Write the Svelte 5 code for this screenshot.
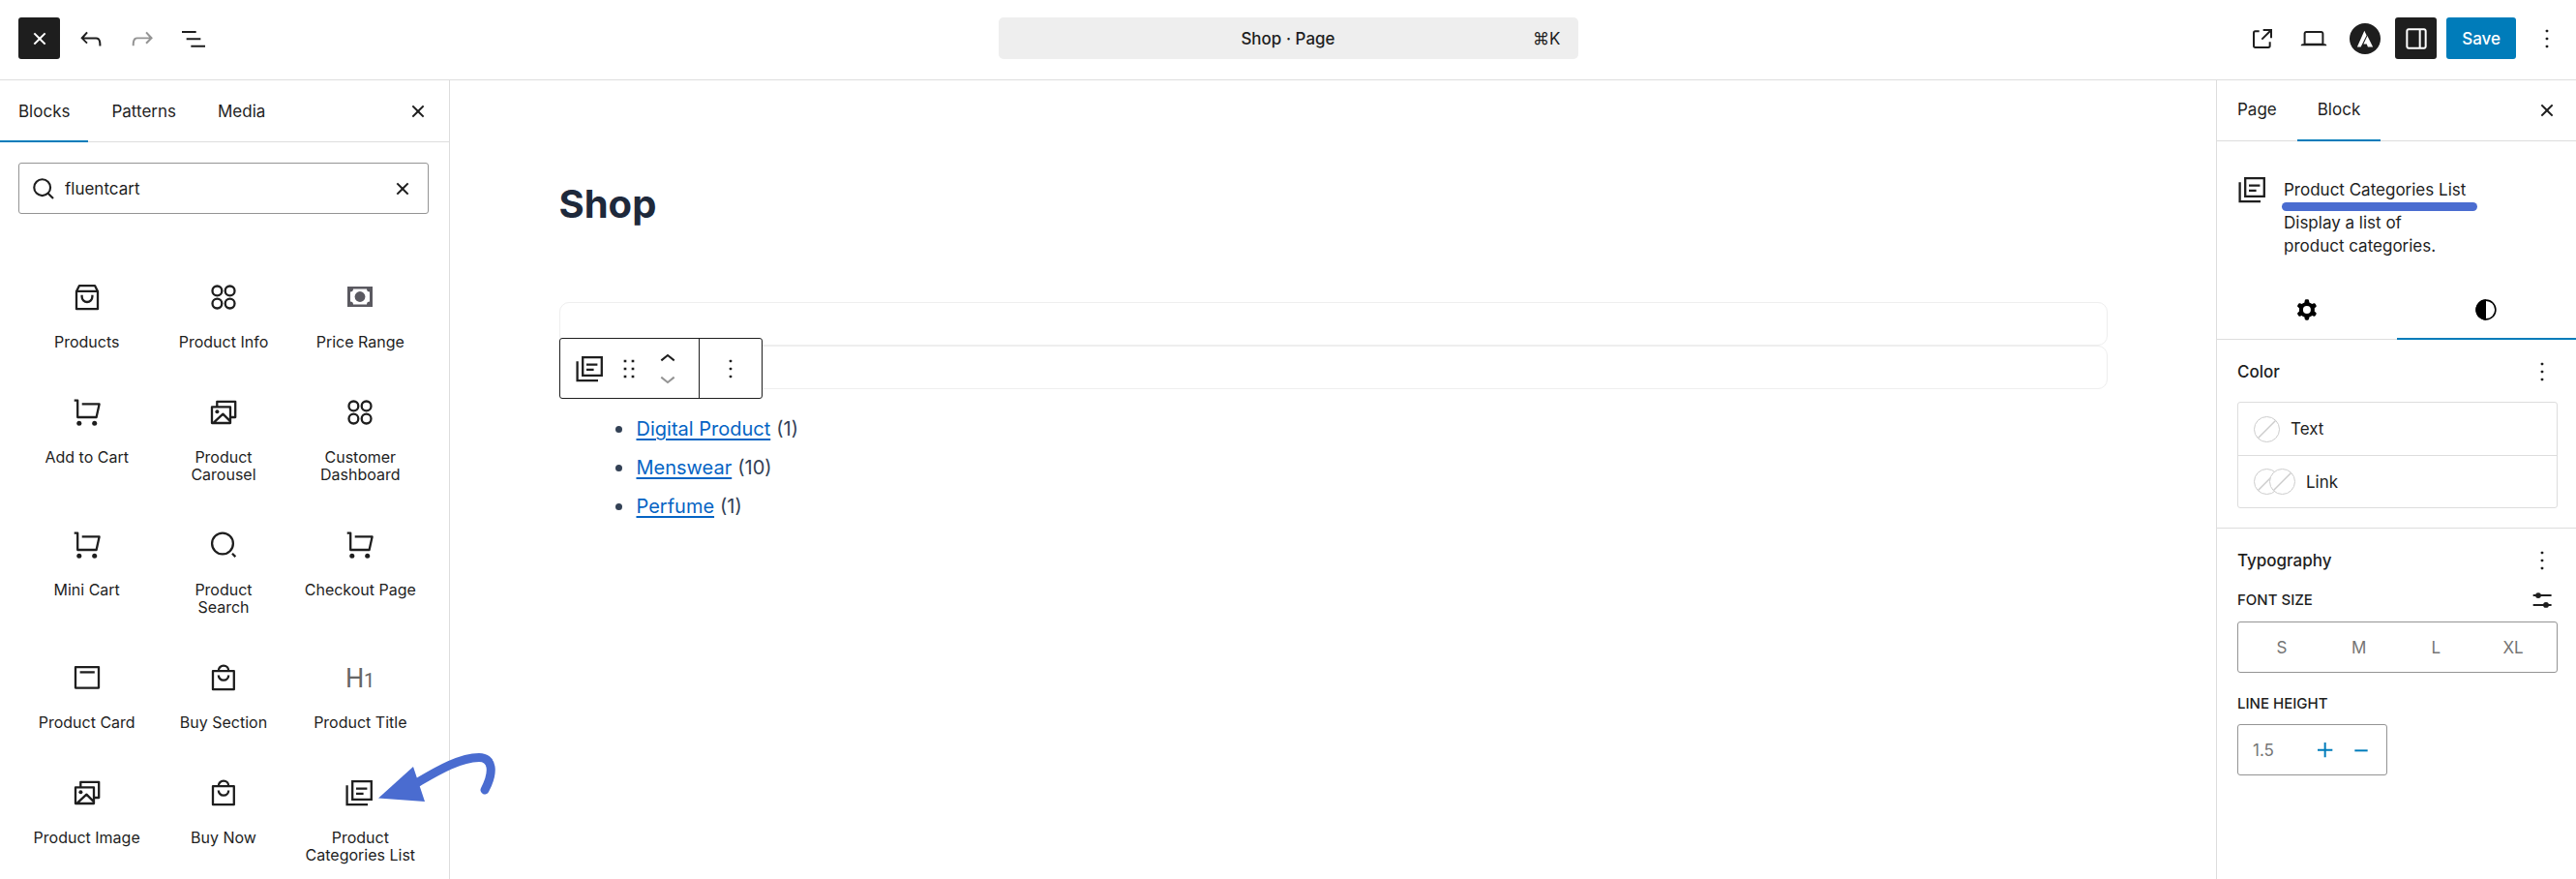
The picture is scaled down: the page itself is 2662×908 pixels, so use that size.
<script>
  const icons = {
    close: '<path d="M12 13.06l3.712 3.713 1.061-1.06L13.061 12l3.712-3.712-1.06-1.06L12 10.938 8.288 7.227l-1.061 1.06L10.939 12l-3.712 3.712 1.06 1.061L12 13.061z"/>',
    undo: '<path d="M18.3 11.7c-.6-.6-1.4-.9-2.3-.9H6.7l2.9-3.3-1.1-1-4.5 5L8.5 16l1-1-2.7-2.7H16c.5 0 .9.2 1.3.5 1 1 1 3.4 1 4.5v.3h1.5v-.2c0-1.5 0-4.3-1.5-5.7z"/>',
    redo: '<path d="M15.6 6.5l-1.1 1 2.9 3.3H8c-.9 0-1.7.3-2.3.9-1.4 1.5-1.4 4.2-1.4 5.6v.2h1.5v-.3c0-1.1 0-3.5 1-4.5.3-.3.7-.5 1.3-.5h9.2L14.5 15l1.1 1.1 4.6-4.6-4.6-5z"/>',
    outline: '<path d="M3 6h11v1.5H3V6Zm3.5 5.5h11V13h-11v-1.5ZM21 17H10v1.5h11V17Z"/>',
    external: '<path d="M19.5 4.5h-7V6h4.44l-5.97 5.97 1.06 1.06L18 7.06v4.44h1.5v-7Zm-13 1a2 2 0 0 0-2 2v10a2 2 0 0 0 2 2h10a2 2 0 0 0 2-2v-3H17v3a.5.5 0 0 1-.5.5h-10a.5.5 0 0 1-.5-.5v-10a.5.5 0 0 1 .5-.5h3V5.5h-3Z"/>',
    laptop: '<path d="M20.5 16h-.7V8c0-1.1-.9-2-2-2H6.2c-1.1 0-2 .9-2 2v8h-.7c-.8 0-1.5.7-1.5 1.5h20c0-.8-.7-1.5-1.5-1.5zM5.7 8c0-.3.2-.5.5-.5h11.6c.3 0 .5.2.5.5v7.6H5.7V8z"/>',
    astra: '<circle cx="12" cy="12" r="12"/><path fill="#fff" d="M11.5 5.9l1.7 3.5-4.5 8.9H5.9zM13.8 9.8l4.3 8.5h-3.9l-.9-2.2h-2.5z"/>',
    drawer: '<path d="M18 4H6c-1.1 0-2 .9-2 2v12c0 1.1.9 2 2 2h12c1.1 0 2-.9 2-2V6c0-1.1-.9-2-2-2zm-4 14.5H6c-.3 0-.5-.2-.5-.5V6c0-.3.2-.5.5-.5h8v13zm4.5-.5c0 .3-.2.5-.5.5h-2.5v-13H18c.3 0 .5.2.5.5v12z"/>',
    more: '<rect x="11" y="5" width="2" height="2" rx=".6"/><rect x="11" y="11" width="2" height="2" rx=".6"/><rect x="11" y="17" width="2" height="2" rx=".6"/>',
    drag: '<path d="M8 7h2V5H8v2zm0 6h2v-2H8v2zm0 6h2v-2H8v2zm6-14v2h2V5h-2zm0 8h2v-2h-2v2zm0 6h2v-2h-2v2z"/>',
    up: '<path d="M6.5 12.4L12 8l5.5 4.4-.9 1.2L12 10l-4.5 3.6-1-1.2z"/>',
    down: '<path d="M17.5 11.6L12 16l-5.5-4.4.9-1.2L12 14l4.5-3.6 1 1.2z"/>',
    find: '<g fill="none" stroke="currentColor" stroke-width="1.6"><circle cx="11" cy="11" r="6.3"/><path d="M15.5 15.5l4 4"/></g>',
    gear: '<path fill-rule="evenodd" d="M10.289 4.836A1 1 0 0111.275 4h1.306a1 1 0 01.987.836l.244 1.466c.787.26 1.503.679 2.108 1.218l1.393-.522a1 1 0 011.216.437l.653 1.13a1 1 0 01-.23 1.273l-1.148.944a6.025 6.025 0 010 2.435l1.149.946a1 1 0 01.23 1.272l-.653 1.13a1 1 0 01-1.216.437l-1.394-.522c-.605.54-1.32.958-2.108 1.218l-.244 1.466a1 1 0 01-.987.836h-1.306a1 1 0 01-.986-.836l-.244-1.466a5.995 5.995 0 01-2.108-1.218l-1.394.522a1 1 0 01-1.217-.436l-.653-1.131a1 1 0 01.23-1.272l1.149-.946a6.026 6.026 0 010-2.435l-1.148-.944a1 1 0 01-.23-1.272l.653-1.131a1 1 0 011.217-.437l1.393.522a5.994 5.994 0 012.108-1.218l.244-1.466zM14.929 12a3 3 0 11-6 0 3 3 0 016 0z"/>',
    styles: '<circle cx="12" cy="12" r="7.4" fill="none" stroke="currentColor" stroke-width="1.2"/><path d="M12 4a8 8 0 0 0 0 16z"/>',
    sliders: '<path d="M5 7.500h14.2V9H5zM5 15h14.2v1.500H5z"/><circle cx="9" cy="8.3" r="2.2"/><circle cx="15" cy="15.700" r="2.2"/>',
    plus: '<path d="M11 12.5V17.5H12.5V12.5H17.5V11H12.5V6H11V11H6V12.5H11Z"/>',
    minus: '<path d="M7 11.5h10V13H7z"/>'
  };

  const line = (body) => `<g fill="none" stroke="currentColor" stroke-width="2.3">${body}</g>`;
  const cart = line('<path d="M2.7 3.6H6.2V21H25.6L28.6 7.4H10.7" stroke-linejoin="round"/>') + '<circle cx="7.8" cy="27.3" r="2.5"/><circle cx="23.7" cy="27.3" r="2.5"/>';
  const circles = line('<circle cx="9.4" cy="9.4" r="4.9"/><circle cx="22.6" cy="9.4" r="4.9"/><circle cx="9.4" cy="22.6" r="4.9"/><circle cx="22.6" cy="22.6" r="4.9"/>');
  const photos = line('<path d="M9.3 9.5V4.8H28.2V21H24M4 10.4h19V27H4zM6 26.4l9.4-8.8 8 8" stroke-linejoin="round"/>') + '<circle cx="9.4" cy="15.2" r="2"/>';
  const bag = line('<path d="M5 9.2h21.8V28.2H5zM10.8 8.8a5.2 5.2 0 0 1 10.4 0M10.8 13.4a5.2 5.2 0 0 0 10.4 0" stroke-linejoin="round"/>');

  const art = {
    list: line('<path d="M8.2 4.1h19.6v18.8H8.2zM2.6 8.2v19.9H24M12 11.6h11.4M12 16.8h7.6"/>'),
    box: line('<path d="M5 10v18.2h22V10L24 4.1H8L5 10zM5 9.8h22M10.6 13.8v1.8a5.4 5.4 0 0 0 10.8 0v-1.8" stroke-linejoin="round"/>'),
    circles,
    price: '<path fill="#5a5960" fill-rule="evenodd" d="M3 5h26v21H3zM9 7.4c0 2-1 3-3 3v10.2c2 0 3 1 3 3h14c0-2 1-3 3-3V10.4c-2 0-3-1-3-3z"/><circle fill="#5a5960" cx="16" cy="15.5" r="5.4"/>',
    cart,
    photos,
    lens: line('<circle cx="15" cy="14.5" r="10.9"/><path d="M25 24.8l3.3 3.3"/>'),
    card: line('<path d="M4 5.2h24v21.4H4z" stroke-linejoin="round"/><path d="M8.6 10.4h15.2"/>'),
    bag,
    heading: '<g fill="#666" font-family="Roboto, sans-serif"><text x="1" y="26" font-size="27">H</text><text x="20" y="26" font-size="20">1</text></g>'
  };

  const blocks = [
    ['box', 'Products'], ['circles', 'Product Info'], ['price', 'Price Range'],
    ['cart', 'Add to Cart'], ['photos', 'Product\nCarousel'], ['circles', 'Customer\nDashboard'],
    ['cart', 'Mini Cart'], ['lens', 'Product\nSearch'], ['cart', 'Checkout Page'],
    ['card', 'Product Card'], ['bag', 'Buy Section'], ['heading', 'Product Title'],
    ['photos', 'Product Image'], ['bag', 'Buy Now'], ['list', 'Product\nCategories List']
  ];
  const categories = [['Digital Product', 1], ['Menswear', 10], ['Perfume', 1]];

  let query = $state('fluentcart');
</script>

{#snippet icon(name)}
  <svg class="icon" viewBox="0 0 24 24" fill="currentColor" aria-hidden="true">{@html icons[name]}</svg>
{/snippet}
{#snippet picture(name)}
  <svg class="icon" viewBox="0 0 32 32" fill="currentColor" aria-hidden="true">{@html art[name]}</svg>
{/snippet}
{#snippet swatch()}
  <svg class="swatch" viewBox="0 0 27 27" aria-hidden="true"><circle cx="13.5" cy="13.5" r="13" fill="#fff" stroke="#ccc" /><path d="M4.5 22.5l18-18" stroke="#ccc" stroke-width="1.5" /></svg>
{/snippet}

<div class="editor">
  <header class="topbar">
    <div class="tools">
      <button class="tool dark" aria-label="Close">{@render icon('close')}</button>
      <button class="tool" aria-label="Undo">{@render icon('undo')}</button>
      <button class="tool faded" aria-label="Redo">{@render icon('redo')}</button>
      <button class="tool" aria-label="Document overview">{@render icon('outline')}</button>
    </div>
    <button class="command"><span></span><span class="doc">Shop · Page</span><span class="keys">⌘K</span></button>
    <div class="tools end">
      <button class="tool" aria-label="View page">{@render icon('external')}</button>
      <button class="tool" aria-label="Preview">{@render icon('laptop')}</button>
      <button class="tool" aria-label="Astra settings">{@render icon('astra')}</button>
      <button class="tool dark" aria-label="Settings">{@render icon('drawer')}</button>
      <button class="save">Save</button>
      <button class="tool" aria-label="Options">{@render icon('more')}</button>
    </div>
  </header>

  <div class="body">
    <aside class="inserter">
      <nav class="tabs left">
        <button class="tab active">Blocks</button>
        <button class="tab">Patterns</button>
        <button class="tab">Media</button>
        <button class="x" aria-label="Close inserter">{@render icon('close')}</button>
      </nav>
      <div class="search">
        {@render icon('find')}
        <input type="text" aria-label="Search blocks" bind:value={query} />
        <button class="plain" aria-label="Reset search">{@render icon('close')}</button>
      </div>
      <div class="grid">
        {#each blocks as [pic, label]}
          <button class="block">{@render picture(pic)}<span>{label}</span></button>
        {/each}
      </div>
    </aside>

    <main class="canvas">
      <div class="content">
        <h1>Shop</h1>
        <div class="slots">
          <div class="slot"></div>
          <div class="slot"></div>
          <div class="toolbar">
            <div class="group">
              <button class="plain" aria-label="Block type">{@render picture('list')}</button>
              <button class="plain drag" aria-label="Drag">{@render icon('drag')}</button>
              <div class="movers">
                <button class="mover" aria-label="Move up">{@render icon('up')}</button>
                <button class="mover faded" aria-label="Move down">{@render icon('down')}</button>
              </div>
            </div>
            <button class="options" aria-label="Block options">{@render icon('more')}</button>
          </div>
        </div>
        <ul>
          {#each categories as [name, count]}
            <li><a href="#{name}">{name}</a> ({count})</li>
          {/each}
        </ul>
      </div>
    </main>

    <aside class="inspector">
      <nav class="tabs right">
        <button class="tab">Page</button>
        <button class="tab active">Block</button>
        <button class="x" aria-label="Close settings">{@render icon('close')}</button>
      </nav>
      <section class="about">
        {@render picture('list')}
        <div>
          <h2 class="name">Product Categories List<span class="marker"></span></h2>
          <p>Display a list of<br />product categories.</p>
        </div>
      </section>
      <nav class="views">
        <button aria-label="Settings">{@render icon('gear')}</button>
        <button class="active" aria-label="Styles">{@render icon('styles')}</button>
      </nav>
      <section class="panel">
        <div class="heading"><h2>Color</h2><button class="plain" aria-label="Color options">{@render icon('more')}</button></div>
        <div class="colors">
          <button class="color">{@render swatch()}<span>Text</span></button>
          <button class="color"><span class="pair">{@render swatch()}{@render swatch()}</span><span>Link</span></button>
        </div>
      </section>
      <section class="panel type">
        <div class="heading"><h2>Typography</h2><button class="plain" aria-label="Typography options">{@render icon('more')}</button></div>
        <div class="caption"><span>FONT SIZE</span><button class="plain" aria-label="Set custom size">{@render icon('sliders')}</button></div>
        <div class="sizes">
          {#each ['S', 'M', 'L', 'XL'] as size}
            <button>{size}</button>
          {/each}
        </div>
        <label class="caption second" for="line-height">LINE HEIGHT</label>
        <div class="stepper">
          <input id="line-height" type="text" placeholder="1.5" />
          <button class="plain" aria-label="Increment">{@render icon('plus')}</button>
          <button class="plain" aria-label="Decrement">{@render icon('minus')}</button>
        </div>
      </section>
    </aside>
  </div>

  <svg class="arrow" viewBox="0 0 124 52" aria-hidden="true">
    <path d="M41 35C60 24 84 9.500 104 9.500C118 9.500 120 24 110 43" fill="none" stroke="#4a6cd0" stroke-width="9" stroke-linecap="round" />
    <path d="M0 51.500L36 19L48 55z" fill="#4a6cd0" />
  </svg>
</div>

<style>
  :global(body) { margin: 0; background: #fff; }
  .editor {
    position: relative;
    display: flex;
    flex-direction: column;
    height: 100vh;
    overflow: hidden;
    background: #fff;
    color: #1e1e1e;
    font: 17px/24px Inter, sans-serif;
  }
  .editor * { box-sizing: border-box; }
  button { padding: 0; border: 0; background: none; color: inherit; font: inherit; }
  input { min-width: 0; padding: 0; border: 0; outline: 0; background: none; color: inherit; font: inherit; }
  h1, h2, p, ul { margin: 0; font-weight: 400; font-size: inherit; }
  .icon { display: block; flex: none; width: 32px; height: 32px; }

  .topbar {
    display: grid;
    grid-template-columns: 1fr 599px 1fr;
    align-items: center;
    padding: 18px 9px 21px;
    border-bottom: 1px solid #ddd;
  }
  .tools { display: flex; gap: 10px; padding-left: 10px; }
  .end { justify-content: flex-end; }
  .tool { display: grid; place-items: center; width: 43px; height: 43px; border-radius: 3px; }
  .dark { background: #1e1e1e; color: #fff; }
  .faded { color: #949494; }
  .command {
    display: grid;
    grid-template-columns: 1fr auto 1fr;
    align-items: center;
    height: 43px;
    padding: 0 18px;
    border-radius: 5px;
    background: #eee;
  }
  .doc { font-weight: 500; }
  .keys { text-align: right; }
  .save { height: 43px; padding: 0 16px; border-radius: 3px; background: #007cba; color: #fff; font-weight: 500; }

  .body { display: flex; flex: 1; min-height: 0; }
  .inserter { flex: none; width: 465px; overflow: hidden; border-right: 1px solid #ddd; }
  .inspector { flex: none; width: 372px; border-left: 1px solid #ddd; }
  .tabs { display: flex; height: 63px; border-bottom: 1px solid #ddd; }
  .tab { position: relative; padding: 0 19px; }
  .left { gap: 5px; height: 64px; }
  .right .tab { padding: 0 21px 2px; }
  .active::after {
    content: '';
    position: absolute;
    right: 0;
    bottom: -1px;
    left: 0;
    height: 2px;
    background: #007cba;
  }
  .x { margin-left: auto; padding: 0 14px; }
  .left .x { padding: 0 16px; }

  .search {
    display: flex;
    align-items: center;
    height: 53px;
    margin: 21px 21px 0 19px;
    padding: 0 10px 0 9px;
    border: 1px solid #949494;
    border-radius: 3px;
  }
  .search input { flex: 1; margin-left: 6px; }
  .grid {
    display: grid;
    grid-template-columns: repeat(3, 1fr);
    margin: 46px 21px 0 19px;
  }
  .block {
    display: flex;
    flex-direction: column;
    align-items: center;
    gap: 21px;
    padding: 24px 8px;
    font-size: 16px;
    line-height: 18px;
    white-space: pre-line;
  }

  .canvas { flex: 1; padding: 104px 112px 0; }
  .content { max-width: 1600px; margin: 0 auto; }
  h1 { color: #1e293b; font-size: 40px; font-weight: 700; line-height: 48px; }
  .slots { position: relative; margin-top: 77px; }
  .slot { height: 45px; border: 1px solid #eee; border-radius: 10px; }
  .toolbar {
    position: absolute;
    top: 37px;
    left: 0;
    display: flex;
    height: 63px;
    border: 1px solid #1e1e1e;
    border-radius: 3px;
    background: #fff;
  }
  .group { display: flex; align-items: center; padding: 0 16px 0 15px; border-right: 1px solid #1e1e1e; }
  .drag { margin: 0 8px; }
  .movers { display: flex; flex-direction: column; }
  .mover { display: flex; align-items: center; height: 20px; }
  .options { padding: 0 16px; }
  ul { margin-top: 21px; padding-left: 80px; color: #334155; font-size: 20px; line-height: 40px; list-style: none; }
  li { display: flex; align-items: center; gap: 6px; }
  li::before {
    content: '';
    width: 7px;
    height: 7px;
    margin: 0 9px 0 -22px;
    border-radius: 50%;
    background: #334155;
  }
  a { color: #0564c4; text-decoration: underline; text-decoration-thickness: 2px; text-underline-offset: 3px; }

  .about { display: flex; gap: 16px; padding: 34px 19px 24px 21px; }
  .name { position: relative; width: max-content; margin: 4px 0 10px; }
  .marker {
    position: absolute;
    right: -12px;
    bottom: -10px;
    left: -2px;
    height: 9px;
    border-radius: 5px;
    background: #4a6cd0;
  }
  .views { display: grid; grid-template-columns: 1fr 1fr; height: 61px; border-bottom: 1px solid #ddd; color: #000; }
  .views button { position: relative; display: grid; place-items: center; }
  .panel { padding: 11px 19px 20px 21px; border-bottom: 1px solid #ddd; }
  .type { border: 0; }
  .heading { display: flex; align-items: center; justify-content: space-between; height: 43px; }
  .heading h2 { font-weight: 500; }
  .colors { margin-top: 10px; border: 1px solid #ddd; border-radius: 3px; }
  .color { display: flex; align-items: center; gap: 11px; width: 100%; height: 54px; padding: 0 16px; }
  .color + .color { border-top: 1px solid #ddd; }
  .swatch { display: block; width: 27px; height: 27px; }
  .pair { display: flex; }
  .pair :global(.swatch + .swatch) { margin-left: -11px; }
  .caption { display: flex; align-items: center; justify-content: space-between; height: 24px; margin: 8px 0 10px; font-size: 15px; font-weight: 500; }
  .second { margin: 20px 0 9px; }
  .sizes { display: grid; grid-template-columns: repeat(4, 1fr); height: 53px; padding: 0 5px; border: 1px solid #949494; border-radius: 3px; color: #757575; }
  .stepper { display: flex; align-items: center; gap: 5px; width: 155px; height: 53px; padding: 0 10px 0 15px; border: 1px solid #949494; border-radius: 3px; color: #007cba; }
  .stepper input { flex: 1; }
  .stepper input::placeholder { color: #757575; opacity: 1; }

  .arrow { position: absolute; top: 773px; left: 391px; width: 124px; height: 52px; overflow: visible; }
</style>
